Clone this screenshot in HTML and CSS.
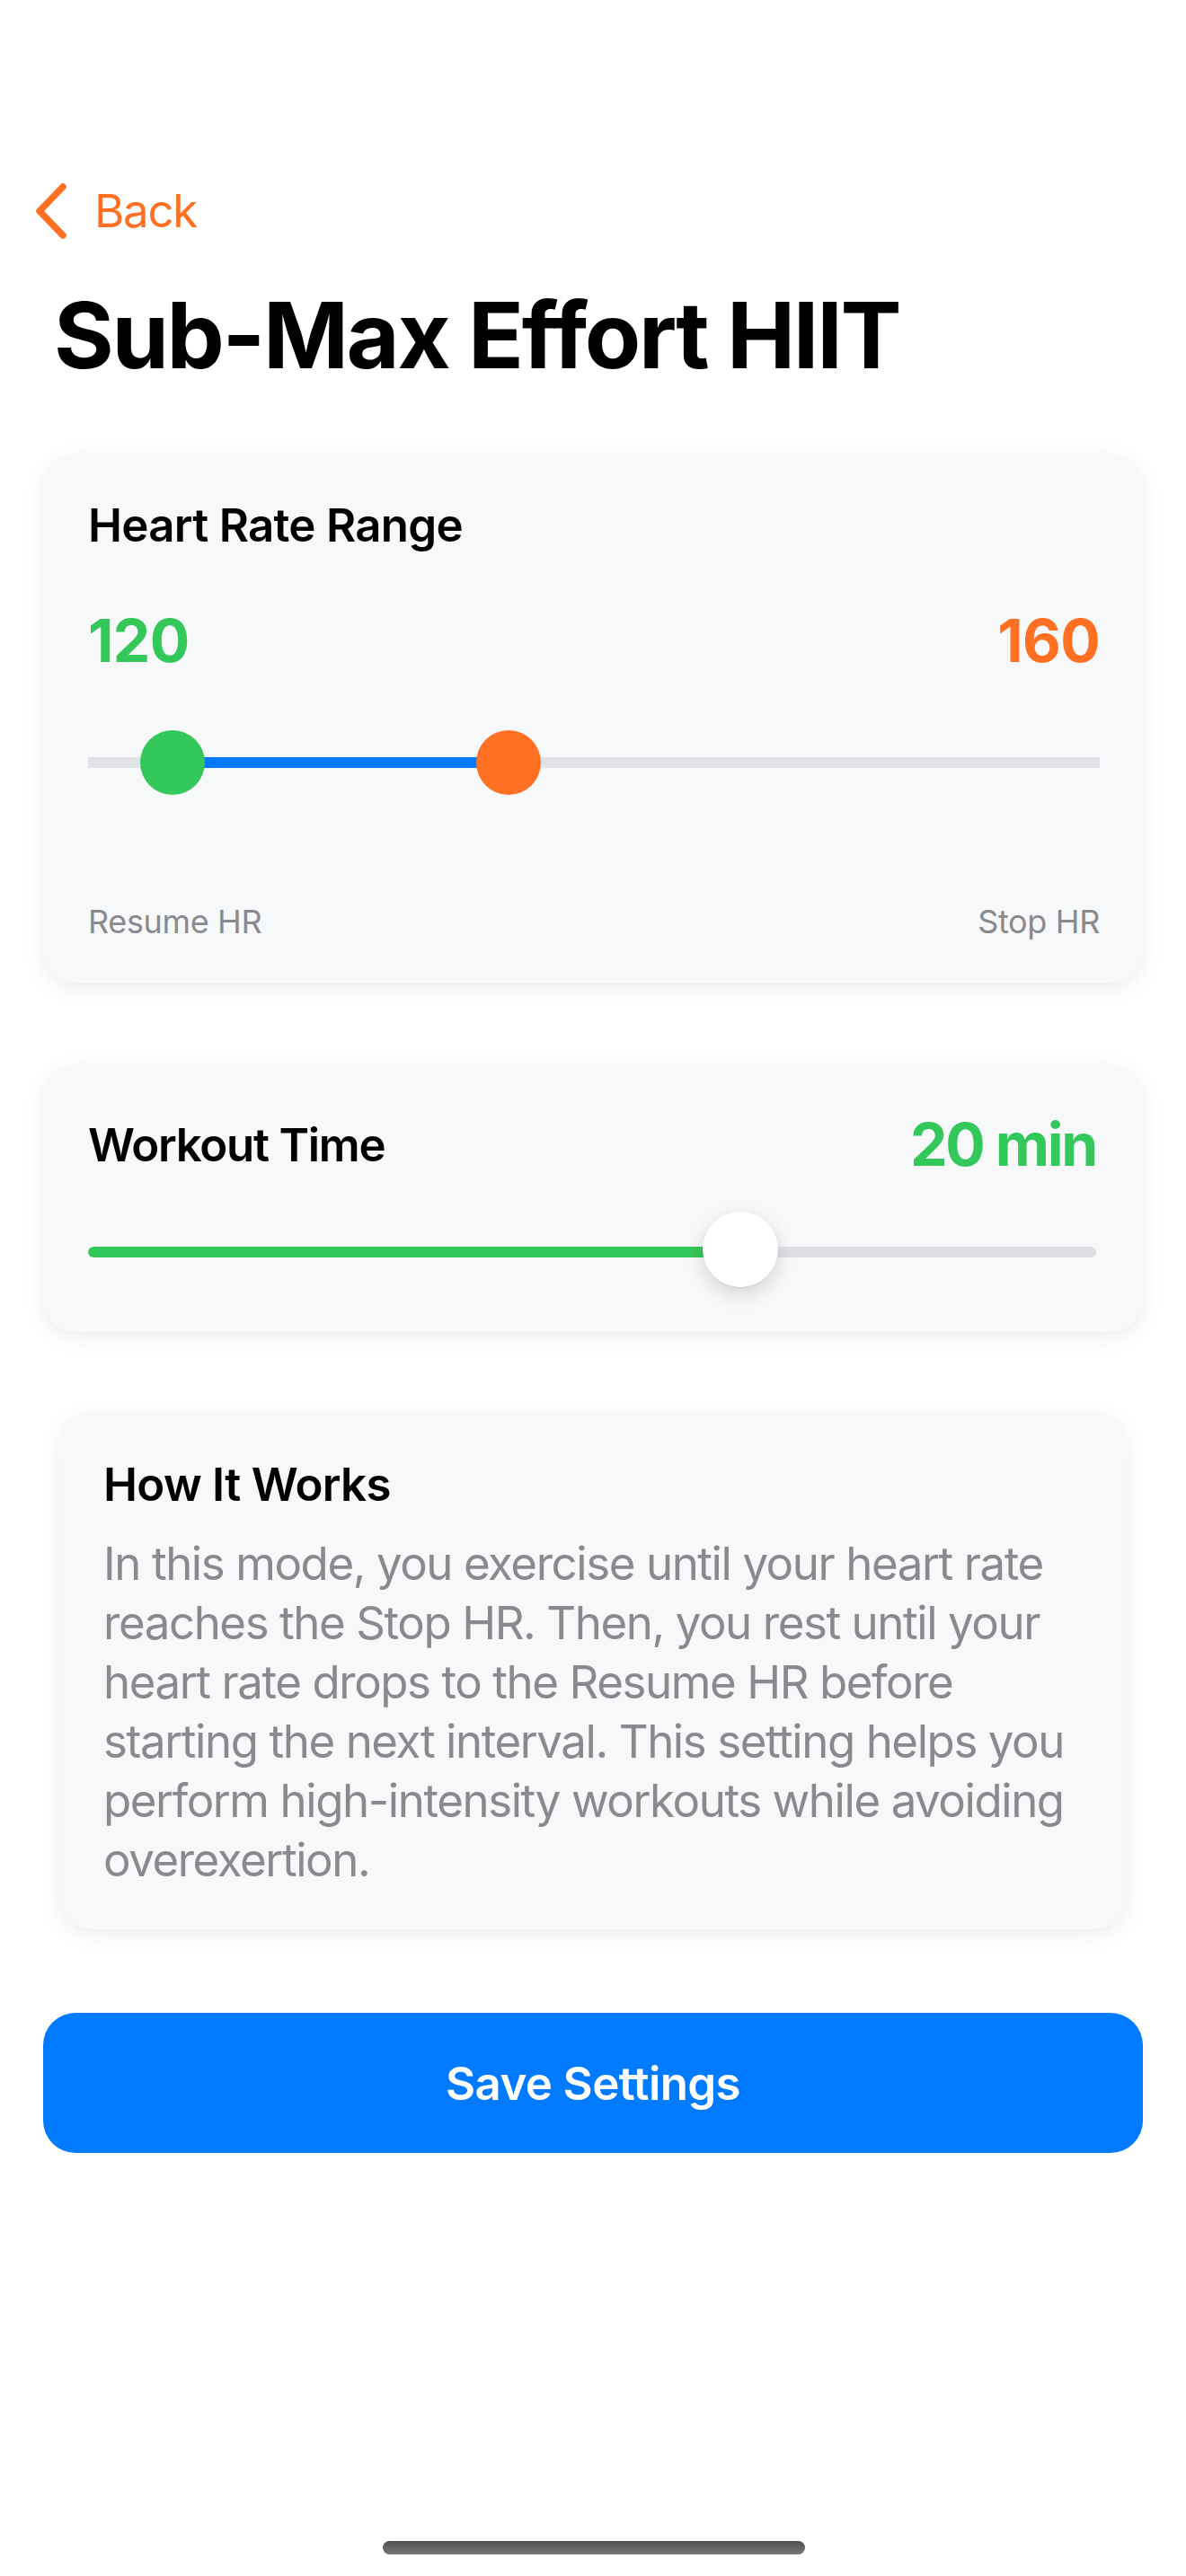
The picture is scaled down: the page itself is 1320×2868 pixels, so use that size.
FILE: index.html
```html
<!DOCTYPE html>
<html lang="en">
<head>
<meta charset="utf-8">
<title>Sub-Max Effort HIIT</title>
<link rel="stylesheet" href="styles.css">
</head>
<body>
<div class="screen">
  <nav class="nav">
    <a class="back" href="#">
      <svg class="chev" width="40" height="62" viewBox="0 0 40 62" aria-hidden="true">
        <path d="M32 4 L6 31 L32 58" fill="none" stroke="#FF7022" stroke-width="7.5" stroke-linecap="round" stroke-linejoin="round"/>
      </svg>
      <span>Back</span>
    </a>
  </nav>

  <h1 class="title">Sub-Max Effort HIIT</h1>

  <section class="card card-hr">
    <h2 class="card-title">Heart Rate Range</h2>
    <div class="values">
      <span class="val val-green">120</span>
      <span class="val val-orange">160</span>
    </div>
    <div class="range">
      <div class="range-track"></div>
      <div class="range-fill" style="left: 8.33%; width: 33.25%;"></div>
      <div class="knob knob-green" style="left: 8.33%;"></div>
      <div class="knob knob-orange" style="left: 41.58%;"></div>
    </div>
    <div class="labels">
      <span>Resume HR</span>
      <span>Stop HR</span>
    </div>
  </section>

  <section class="card card-time">
    <div class="time-row">
      <h2 class="card-title card-title-tight">Workout Time</h2>
      <span class="val val-green val-tight">20 min</span>
    </div>
    <div class="slider">
      <div class="slider-track">
        <div class="slider-fill" style="width: 64.7%;"></div>
      </div>
      <div class="slider-thumb" style="left: 64.7%;"></div>
    </div>
  </section>

  <section class="card card-info">
    <h2 class="card-title">How It Works</h2>
    <p class="info-text">In this mode, you exercise until your heart rate reaches the Stop HR. Then, you rest until your heart rate drops to the Resume HR before starting the next interval. This setting helps you perform high-intensity workouts while avoiding overexertion.</p>
  </section>

  <button class="save">Save Settings</button>

  <div class="home-indicator"></div>
</div>
</body>
</html>
```

FILE: styles.css
```css
* { box-sizing: border-box; }

html, body {
  margin: 0;
  padding: 0;
  background: #ffffff;
}

body {
  font-family: "Inter", "Noto Sans", "Liberation Sans", sans-serif;
  color: #000;
  -webkit-font-smoothing: antialiased;
}

.screen {
  width: 1320px;
  height: 2868px;
  display: flex;
  flex-direction: column;
  padding: 204px 48px 0 48px;
  position: relative;
}

.nav {
  display: flex;
  height: 61px;
  margin-left: -10px;
}

.back {
  display: flex;
  align-items: center;
  gap: 27px;
  color: #FF7022;
  text-decoration: none;
  font-size: 51px;
  line-height: 61px;
  font-weight: 400;
  letter-spacing: -0.025em;
}

.chev { display: block; }

.title {
  margin: 47px 0 0 12px;
  font-size: 102px;
  line-height: 122px;
  font-weight: 700;
  letter-spacing: -0.023em;
}

.card {
  background: #F7F8FA;
  border-radius: 36px;
  box-shadow: 0 6px 24px rgba(0, 0, 0, 0.07), 0 1px 3px rgba(0, 0, 0, 0.02);
  padding: 49px 48px 47px 50px;
}

.card-title {
  margin: 0;
  font-size: 51px;
  line-height: 61px;
  font-weight: 600;
  letter-spacing: -0.014em;
}

.card-title-tight { letter-spacing: -0.025em; }

.card-hr {
  margin-top: 71px;
  height: 590px;
}

.values {
  display: flex;
  justify-content: space-between;
  margin-top: 58px;
}

.val {
  font-size: 66px;
  line-height: 80px;
  font-weight: 700;
  letter-spacing: -0.01em;
}

.val-tight { letter-spacing: -0.035em; }

.val-green { color: #34C759; }
.val-orange { color: #FF7022; }

.range {
  position: relative;
  margin-top: 60px;
  height: 72px;
  display: flex;
  align-items: center;
}

.range-track {
  width: 100%;
  height: 12px;
  background: #E2E3E6;
}

.range-fill {
  position: absolute;
  top: 30px;
  height: 12px;
  background: #007AFF;
}

.knob {
  position: absolute;
  top: 0;
  width: 72px;
  height: 72px;
  border-radius: 50%;
  transform: translateX(-36px);
}

.knob-green { background: #34C759; }
.knob-orange { background: #FF7022; }

.labels {
  display: flex;
  justify-content: space-between;
  margin-top: 119px;
  font-size: 36px;
  line-height: 44px;
  color: #8A8A8E;
  letter-spacing: -0.01em;
}

.card-time {
  margin-top: 90px;
  height: 298px;
  padding: 49px 52px 50px 50px;
}

.time-row {
  display: flex;
  justify-content: space-between;
  align-items: center;
  height: 80px;
}

.slider {
  position: relative;
  margin-top: 35px;
  height: 84px;
  display: flex;
  align-items: center;
}

.slider-track {
  width: 100%;
  height: 12px;
  border-radius: 6px;
  background: #DEDFE3;
  overflow: hidden;
  margin-top: 6px;
}

.slider-fill {
  height: 100%;
  background: #34C759;
  border-radius: 6px 0 0 6px;
}

.slider-thumb {
  position: absolute;
  top: 0;
  width: 84px;
  height: 84px;
  border-radius: 50%;
  background: #ffffff;
  transform: translateX(-42px);
  box-shadow: 0 8px 22px rgba(0, 0, 0, 0.14), 0 1px 2px rgba(0, 0, 0, 0.06);
}

.card-info {
  margin: 89px 18px 0 18px;
  padding: 50px 48px 44px 49px;
}

.info-text {
  margin: 25px 0 0 0;
  font-size: 51px;
  line-height: 66px;
  color: #8A8A8E;
  letter-spacing: -0.028em;
}

.save {
  margin-top: 93px;
  height: 156px;
  width: 100%;
  border: none;
  border-radius: 36px;
  background: #007AFF;
  color: #ffffff;
  font-family: "Inter", "Noto Sans", "Liberation Sans", sans-serif;
  font-size: 51px;
  font-weight: 600;
  letter-spacing: -0.012em;
  cursor: pointer;
}

.home-indicator {
  position: absolute;
  left: 426px;
  top: 2829px;
  width: 470px;
  height: 15px;
  border-radius: 8px;
  background: linear-gradient(#4f4f4f, #787878);
}
```
